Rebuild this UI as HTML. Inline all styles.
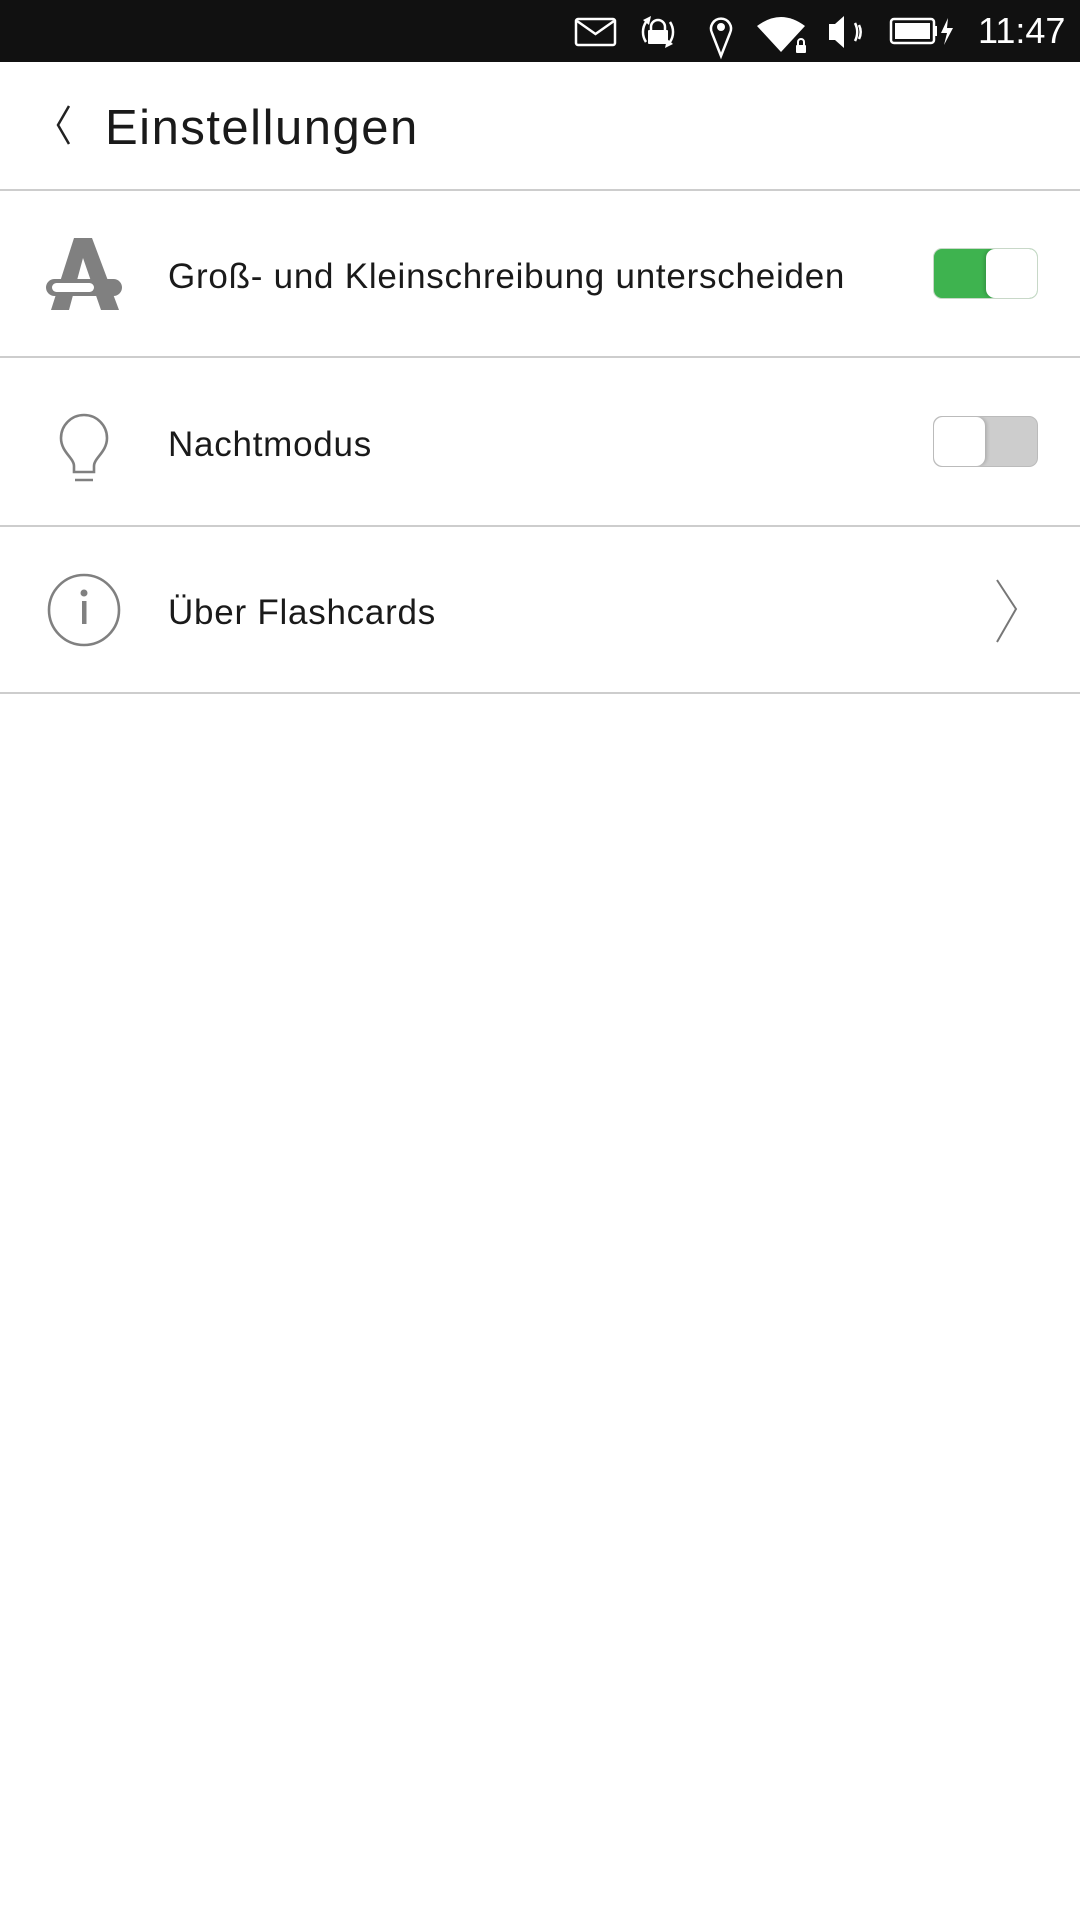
<!DOCTYPE html>
<html><head><meta charset="utf-8"><style>
html,body{margin:0;padding:0;width:1080px;height:1920px;background:#fff;overflow:hidden;font-family:"Liberation Sans","DejaVu Sans",sans-serif;}
.abs{position:absolute}
.sb{left:0;top:0;width:1080px;height:62px;background:#111}
.div{left:0;width:1080px;height:2px;background:#cdcdcd}
.t{color:#1a1a1a;white-space:nowrap}
</style></head><body>
<div class="abs sb"></div>
<svg class="abs" style="left:0;top:0" width="1080" height="62" viewBox="0 0 1080 62">
 <g fill="none" stroke="#fff" stroke-width="2.5">
  <rect x="576" y="19" width="39" height="26" rx="2"/>
  <path d="M577 21 L595.5 34 L614 21"/>
  <path d="M646 22 A18 18 0 0 0 646 42"/>
  <path d="M670 42 A18 18 0 0 0 670 22"/>
  <path d="M651 31 v-4 a7 7 0 0 1 14 0 v4"/>
  <path d="M721 56 L712 33 A10 10 0 1 1 730 33 Z"/>
  <circle cx="721" cy="27" r="4" fill="#fff" stroke="none"/>
  <rect x="891" y="19" width="43" height="24" rx="3"/>
  <path d="M884 24 a16 16 0 0 1 0 14 M880 22 a20 20 0 0 1 0 18" transform="translate(-25 1)"/>
 </g>
 <g fill="#fff">
  <path d="M643 20 L651 16 L649 25 Z"/><path d="M673 44 L665 48 L667 39 Z"/>
  <rect x="648" y="30" width="20" height="14" rx="1"/>
  <path d="M757 26 Q781 8 805 26 L781 52 Z"/>
  <rect x="794" y="42" width="13" height="11" fill="#111"/>
  <rect x="796" y="45" width="10" height="8" rx="1"/>
  <path d="M798 45 v-3 a3 3 0 0 1 6 0 v3" fill="none" stroke="#fff" stroke-width="2"/>
  <path d="M829 24 h6 l9 -8 v32 l-9 -8 h-6 Z"/>
  <rect x="895" y="23" width="35" height="16"/>
  <rect x="934" y="26" width="3" height="10"/>
  <path d="M948 18 L941 33 H947 L944 45 L953 28 H947 Z"/>
 </g>
 <text x="978" y="43" fill="#fff" font-size="36" font-family="Liberation Sans, sans-serif">11:47</text>
</svg>

<svg class="abs" style="left:0;top:62" width="1080" height="128">
 <path d="M69 44 L58 63 L69 82" fill="none" stroke="#222" stroke-width="2.5"/>
</svg>
<div class="abs t" style="left:105px;top:100px;font-size:49px;line-height:56px;letter-spacing:1.5px">Einstellungen</div>
<div class="abs div" style="top:189px"></div>

<svg class="abs" style="left:0;top:190" width="160" height="504">
 <g fill="#808080">
  <path d="M74 48 H92 L119 120 H101 L83 68 L69 120 H51 Z"/>
  <rect x="46" y="89" width="76" height="17" rx="8.5"/>
 </g>
 <rect x="52" y="93" width="42" height="9" rx="4.5" fill="#fff"/>
 <g fill="none" stroke="#808080" stroke-width="2.6">
  <path d="M74 276 C74 268 61 262 61 248 A23 23 0 1 1 107 248 C107 262 94 268 94 276 V282 H74 Z"/>
  <path d="M75 290 H93"/>
  <circle cx="84" cy="420" r="35"/>
 </g>
 <circle cx="84" cy="403" r="3.5" fill="#808080"/>
 <rect x="82" y="411" width="4.5" height="23" fill="#808080"/>
</svg>

<div class="abs t" style="left:168px;top:257px;font-size:35px;line-height:40px;letter-spacing:0.75px">Groß- und Kleinschreibung unterscheiden</div>
<div class="abs" style="left:933px;top:248px;width:105px;height:51px;border-radius:9px;background:#3eb34f;overflow:hidden;border:1px solid #c8d8c8;box-sizing:border-box">
 <div class="abs" style="left:52px;top:0;width:52px;height:49px;background:#fff;border-radius:9px;box-shadow:-2px 0 3px rgba(0,0,0,.15)"></div>
</div>
<div class="abs div" style="top:356px"></div>

<div class="abs t" style="left:168px;top:425px;font-size:35px;line-height:40px;letter-spacing:0.75px">Nachtmodus</div>
<div class="abs" style="left:933px;top:416px;width:105px;height:51px;border-radius:9px;background:#cdcdcd;overflow:hidden;border:1px solid #bbb;box-sizing:border-box">
 <div class="abs" style="left:0;top:0;width:51px;height:49px;background:#fff;border-radius:9px;box-shadow:2px 0 3px rgba(0,0,0,.15)"></div>
</div>
<div class="abs div" style="top:525px"></div>

<div class="abs t" style="left:168px;top:593px;font-size:35px;line-height:40px;letter-spacing:0.75px">Über Flashcards</div>
<svg class="abs" style="left:990px;top:575px" width="40" height="72">
 <path d="M7 5 L26 34 L7 67" fill="none" stroke="#777" stroke-width="2"/>
</svg>
<div class="abs div" style="top:692px"></div>
</body></html>
